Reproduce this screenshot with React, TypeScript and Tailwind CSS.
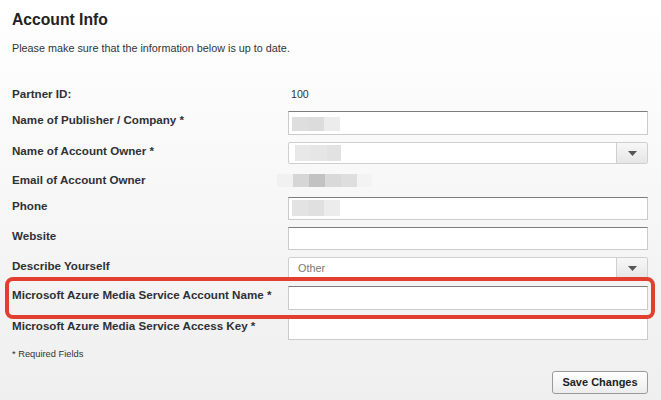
import React from "react";

const inputCls =
  "w-[360px] bg-white border border-[#cbcbcb] border-t-[#7d7d7d]";

function Blocks({ items, h }: { items: [number, string][]; h: string }) {
  return (
    <div className={`flex ${h}`}>
      {items.map(([w, c], i) => (
        <div key={i} style={{ width: w, background: c }} />
      ))}
    </div>
  );
}

function Select({
  h,
  children,
}: {
  h: string;
  children?: React.ReactNode;
}) {
  return (
    <div
      className={`w-[360px] ${h} flex bg-white border border-[#cfcfcf] rounded-[2px] overflow-hidden`}
    >
      <div className="flex-1 flex items-center">{children}</div>
      <div className="w-[31px] h-full border-l border-[#cfcfcf] bg-gradient-to-b from-[#f7f7f7] to-[#e6e6e6] flex items-center justify-center">
        <svg width="9" height="5" viewBox="0 0 9 5">
          <path d="M0 0 L9 0 L4.5 5 Z" fill="#555" />
        </svg>
      </div>
    </div>
  );
}

function Label({ children }: { children: React.ReactNode }) {
  return (
    <div className="w-[276px] shrink-0 pt-[2px] text-[11.6px] leading-[14px] font-bold text-[#2f3136]">
      {children}
    </div>
  );
}

export default function App() {
  return (
    <div className="w-[661px] h-[400px] bg-gradient-to-b from-white to-[#efefef] font-['Liberation_Sans',Arial,sans-serif] text-[#333] pl-3 pr-[13px] overflow-hidden">
      <h1 className="pt-[10px] text-[15.7px] leading-[19px] font-bold text-[#222]">
        Account Info
      </h1>
      <p className="mt-[13px] text-[10.8px] leading-[13px] text-[#333]">
        Please make sure that the information below is up to date.
      </p>

      <div className="mt-[30px] flex flex-col">
        {/* Partner ID */}
        <div className="flex h-[26px]">
          <Label>Partner ID:</Label>
          <div className="pl-[3px] pt-[3px] text-[10.6px] leading-[13px] text-[#333]">
            100
          </div>
        </div>

        {/* Publisher */}
        <div className="flex h-[31px]">
          <Label>Name of Publisher / Company *</Label>
          <div className={`${inputCls} h-[24px] pl-[3px] pt-[5px]`}>
            <Blocks
              h="h-[14px]"
              items={[
                [16, "#dedede"],
                [16, "#dcdcdc"],
                [16, "#ececec"],
              ]}
            />
          </div>
        </div>

        {/* Account Owner */}
        <div className="flex h-[29px]">
          <Label>Name of Account Owner *</Label>
          <Select h="h-[22px]">
            <div className="pl-[6px]">
              <Blocks
                h="h-[16px]"
                items={[
                  [16, "#e8e8e8"],
                  [16, "#e6e6e6"],
                  [14, "#e2e2e2"],
                ]}
              />
            </div>
          </Select>
        </div>

        {/* Email */}
        <div className="flex h-[26px]">
          <Label>Email of Account Owner</Label>
          <div className="-ml-[11px] pt-[3px]">
            <Blocks
              h="h-[13px]"
              items={[
                [16, "#f1f1f1"],
                [16, "#d6d6d6"],
                [16, "#c2c2c2"],
                [16, "#d9d9d9"],
                [16, "#dedede"],
                [15, "#f3f3f3"],
              ]}
            />
          </div>
        </div>

        {/* Phone */}
        <div className="flex h-[30px]">
          <Label>Phone</Label>
          <div className={`${inputCls} h-[23px] pl-[3px] pt-[2px]`}>
            <Blocks
              h="h-[16px]"
              items={[
                [16, "#e3e3e3"],
                [16, "#e0e0e0"],
                [16, "#ececec"],
              ]}
            />
          </div>
        </div>

        {/* Website */}
        <div className="flex h-[30px]">
          <Label>Website</Label>
          <div className={`${inputCls} h-[23px]`} />
        </div>

        {/* Describe */}
        <div className="flex h-[29px]">
          <Label>Describe Yourself</Label>
          <Select h="h-[23px]">
            <span className="pl-[9px] text-[10.8px] text-[#777]">Other</span>
          </Select>
        </div>

        {/* Azure Account Name */}
        <div className="flex h-[31px] relative">
          <Label>Microsoft Azure Media Service Account Name *</Label>
          <div className={`${inputCls} h-[24px]`} />
          <div className="absolute -top-[9px] -left-[7px] -right-[7px] -bottom-[2px] border-[4px] border-[#e33f30] rounded-[8px] pointer-events-none" />
        </div>

        {/* Access Key */}
        <div className="flex h-[23px]">
          <Label>Microsoft Azure Media Service Access Key *</Label>
          <div className={`${inputCls} h-[23px] border-t-[#cbcbcb]`} />
        </div>
      </div>

      <p className="mt-[8px] text-[9.3px] leading-[12px] text-[#333]">
        * Required Fields
      </p>

      <div className="mt-[11px] flex justify-end">
        <button className="w-[96px] h-[23px] border border-[#9a9a9a] rounded-[3px] bg-gradient-to-b from-white to-[#ececec] text-[11px] font-bold text-[#222]">
          Save Changes
        </button>
      </div>
    </div>
  );
}
